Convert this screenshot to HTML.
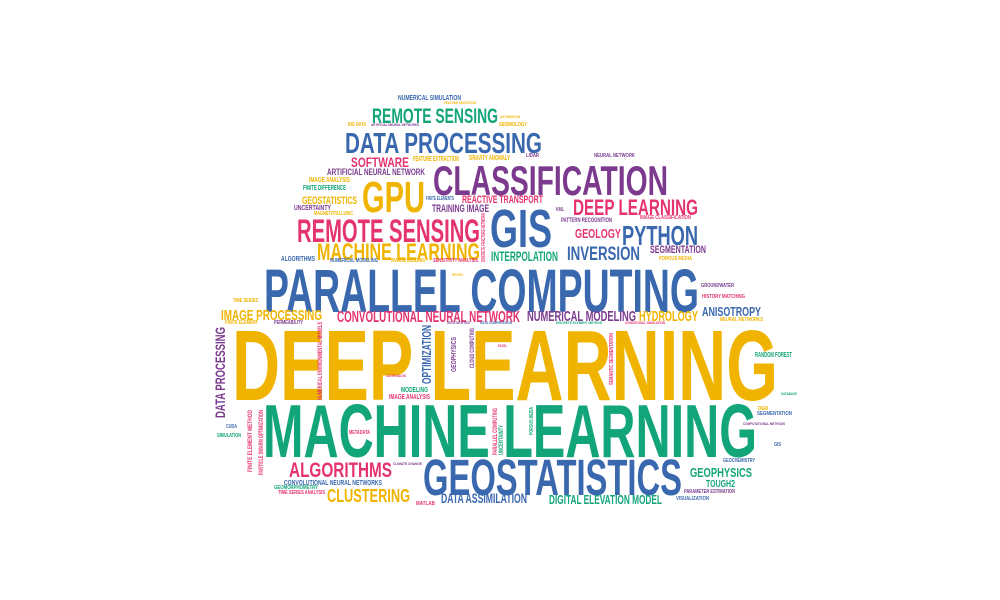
<!DOCTYPE html>
<html><head><meta charset="utf-8"><style>
html,body{margin:0;padding:0;background:#fff;width:1000px;height:600px;overflow:hidden}
svg{display:block}
text{font-family:"Liberation Sans",sans-serif;font-weight:bold}
</style></head><body>
<svg width="1000" height="600" viewBox="0 0 1000 600" xmlns="http://www.w3.org/2000/svg">
<defs><style>
.g{fill:#f0b400}.n{fill:#13a57a}.b{fill:#3a68ae}.p{fill:#7b3a8e}.k{fill:#e5336d}
</style></defs>
<g lengthAdjust="spacingAndGlyphs">
<!-- big -->
<text class="g" x="232" y="400" font-size="100" textLength="546" lengthAdjust="spacingAndGlyphs">DEEP LEARNING</text>
<text class="n" x="263" y="457" font-size="75" textLength="494" lengthAdjust="spacingAndGlyphs">MACHINE LEARNING</text>
<text class="b" x="264" y="312" font-size="61" textLength="435" lengthAdjust="spacingAndGlyphs">PARALLEL COMPUTING</text>
<text class="b" x="423" y="495" font-size="51" textLength="259" lengthAdjust="spacingAndGlyphs">GEOSTATISTICS</text>
<text class="p" x="433" y="195" font-size="42" textLength="235" lengthAdjust="spacingAndGlyphs">CLASSIFICATION</text>
<text class="b" x="490" y="247" font-size="54" textLength="62" lengthAdjust="spacingAndGlyphs">GIS</text>
<text class="g" x="362" y="212" font-size="44" textLength="63" lengthAdjust="spacingAndGlyphs">GPU</text>
<text class="k" x="297" y="242" font-size="32" textLength="183" lengthAdjust="spacingAndGlyphs">REMOTE SENSING</text>
<text class="g" x="317" y="260" font-size="24" textLength="163" lengthAdjust="spacingAndGlyphs">MACHINE LEARNING</text>
<text class="b" x="345" y="153" font-size="29" textLength="197" lengthAdjust="spacingAndGlyphs">DATA PROCESSING</text>
<text class="n" x="372" y="123" font-size="21" textLength="126" lengthAdjust="spacingAndGlyphs">REMOTE SENSING</text>
<text class="k" x="573" y="215" font-size="22" textLength="125" lengthAdjust="spacingAndGlyphs">DEEP LEARNING</text>
<text class="b" x="622" y="245" font-size="28" textLength="76" lengthAdjust="spacingAndGlyphs">PYTHON</text>
<text class="b" x="567" y="260" font-size="19" textLength="73" lengthAdjust="spacingAndGlyphs">INVERSION</text>
<text class="k" x="289" y="477" font-size="21" textLength="103" lengthAdjust="spacingAndGlyphs">ALGORITHMS</text>
<text class="g" x="327" y="502" font-size="18" textLength="83" lengthAdjust="spacingAndGlyphs">CLUSTERING</text>
<text class="k" x="337" y="322" font-size="16" textLength="183" lengthAdjust="spacingAndGlyphs">CONVOLUTIONAL NEURAL NETWORK</text>
<text class="p" x="527" y="321" font-size="15" textLength="109" lengthAdjust="spacingAndGlyphs">NUMERICAL MODELING</text>
<text class="g" x="639" y="321" font-size="15" textLength="59" lengthAdjust="spacingAndGlyphs">HYDROLOGY</text>
<text class="b" x="702" y="316" font-size="13" textLength="59" lengthAdjust="spacingAndGlyphs">ANISOTROPY</text>
<text class="g" x="221" y="320" font-size="15" textLength="101" lengthAdjust="spacingAndGlyphs">IMAGE PROCESSING</text>
<text class="b" x="441" y="503" font-size="14" textLength="86" lengthAdjust="spacingAndGlyphs">DATA ASSIMILATION</text>
<text class="n" x="549" y="504" font-size="13" textLength="113" lengthAdjust="spacingAndGlyphs">DIGITAL ELEVATION MODEL</text>
<text class="n" x="690" y="477" font-size="13" textLength="62" lengthAdjust="spacingAndGlyphs">GEOPHYSICS</text>
<text class="n" x="706" y="487" font-size="10" textLength="29" lengthAdjust="spacingAndGlyphs">TOUGH2</text>
<text class="k" x="575" y="238" font-size="13" textLength="46" lengthAdjust="spacingAndGlyphs">GEOLOGY</text>
<text class="n" x="491" y="261" font-size="14" textLength="67" lengthAdjust="spacingAndGlyphs">INTERPOLATION</text>
<text class="p" x="650" y="253" font-size="11" textLength="56" lengthAdjust="spacingAndGlyphs">SEGMENTATION</text>
<text class="k" x="351" y="167" font-size="14" textLength="58" lengthAdjust="spacingAndGlyphs">SOFTWARE</text>
<text class="k" x="462" y="203" font-size="11" textLength="81" lengthAdjust="spacingAndGlyphs">REACTIVE TRANSPORT</text>
<text class="p" x="432" y="212" font-size="11" textLength="57" lengthAdjust="spacingAndGlyphs">TRAINING IMAGE</text>
<text class="g" x="302" y="204" font-size="11" textLength="55" lengthAdjust="spacingAndGlyphs">GEOSTATISTICS</text>
<text class="p" x="327" y="175" font-size="9" textLength="98" lengthAdjust="spacingAndGlyphs">ARTIFICIAL NEURAL NETWORK</text>
<!-- small -->
<g font-size="7" font-weight="normal">
<text class="g" x="309" y="182" textLength="41" lengthAdjust="spacingAndGlyphs">IMAGE ANALYSIS</text>
<text class="n" x="303" y="190" textLength="43" lengthAdjust="spacingAndGlyphs">FINITE DIFFERENCE</text>
<text class="p" x="294" y="210" textLength="37" lengthAdjust="spacingAndGlyphs">UNCERTAINTY</text>
<text class="g" x="314" y="215" font-size="5" textLength="39" lengthAdjust="spacingAndGlyphs">MAGNETOTELLURIC</text>
<text class="g" x="413" y="161" textLength="46" lengthAdjust="spacingAndGlyphs">FEATURE EXTRACTION</text>
<text class="g" x="469" y="160" textLength="41" lengthAdjust="spacingAndGlyphs">GRAVITY ANOMALY</text>
<text class="b" x="426" y="200" font-size="5" textLength="28" lengthAdjust="spacingAndGlyphs">FINITE ELEMENTS</text>
<text class="b" x="398" y="100" textLength="63" lengthAdjust="spacingAndGlyphs">NUMERICAL SIMULATION</text>
<text class="g" x="444" y="104" font-size="4" textLength="32" lengthAdjust="spacingAndGlyphs">FEATURE SELECTION</text>
<text class="g" x="348" y="126" font-size="5" textLength="18" lengthAdjust="spacingAndGlyphs">BIG DATA</text>
<text class="p" x="371" y="126" font-size="4" textLength="48" lengthAdjust="spacingAndGlyphs">ARTIFICIAL NEURAL NETWORKS</text>
<text class="g" x="500" y="118" font-size="4" textLength="20" lengthAdjust="spacingAndGlyphs">AUTOMATION</text>
<text class="g" x="499" y="126" font-size="5" textLength="28" lengthAdjust="spacingAndGlyphs">SEISMOLOGY</text>
<text class="p" x="526" y="157" font-size="5" textLength="13" lengthAdjust="spacingAndGlyphs">LIDAR</text>
<text class="p" x="594" y="157" font-size="5" textLength="41" lengthAdjust="spacingAndGlyphs">NEURAL NETWORK</text>
<text class="p" x="556" y="211" font-size="5" textLength="8" lengthAdjust="spacingAndGlyphs">KML</text>
<text class="p" x="561" y="222" font-size="6" textLength="51" lengthAdjust="spacingAndGlyphs">PATTERN RECOGNITION</text>
<text class="k" x="640" y="219" font-size="5" textLength="51" lengthAdjust="spacingAndGlyphs">IMAGE CLASSIFICATION</text>
<text class="g" x="659" y="260" font-size="5" textLength="33" lengthAdjust="spacingAndGlyphs">POROUS MEDIA</text>
<text class="p" x="701" y="287" font-size="5" textLength="33" lengthAdjust="spacingAndGlyphs">GROUNDWATER</text>
<text class="k" x="702" y="298" font-size="5" textLength="43" lengthAdjust="spacingAndGlyphs">HISTORY MATCHING</text>
<text class="g" x="720" y="321" font-size="5" textLength="43" lengthAdjust="spacingAndGlyphs">NEURAL NETWORKS</text>
<text class="g" x="233" y="302" font-size="5" textLength="25" lengthAdjust="spacingAndGlyphs">TIME SERIES</text>
<text class="g" x="225" y="324" font-size="5" textLength="33" lengthAdjust="spacingAndGlyphs">FINITE ELEMENT</text>
<text class="p" x="274" y="324" font-size="5" textLength="29" lengthAdjust="spacingAndGlyphs">PERMEABILITY</text>
<text class="b" x="281" y="261" textLength="34" lengthAdjust="spacingAndGlyphs">ALGORITHMS</text>
<text class="b" x="330" y="262" font-size="5" textLength="48" lengthAdjust="spacingAndGlyphs">NUMERICAL MODELING</text>
<text class="g" x="391" y="262" font-size="5" textLength="34" lengthAdjust="spacingAndGlyphs">INVERSE MODELING</text>
<text class="k" x="433" y="262" font-size="5" textLength="45" lengthAdjust="spacingAndGlyphs">SENSITIVITY ANALYSIS</text>
<text class="g" x="452" y="276" font-size="4" textLength="11" lengthAdjust="spacingAndGlyphs">GPGPU</text>
<text class="k" x="389" y="399" textLength="41" lengthAdjust="spacingAndGlyphs">IMAGE ANALYSIS</text>
<text class="n" x="401" y="392" textLength="27" lengthAdjust="spacingAndGlyphs">MODELING</text>
<text class="k" x="386" y="377" font-size="4" textLength="20" lengthAdjust="spacingAndGlyphs">CLUSTER ANALYSIS</text>
<text class="k" x="349" y="434" font-size="5" textLength="21" lengthAdjust="spacingAndGlyphs">METADATA</text>
<text class="b" x="226" y="428" font-size="5" textLength="11" lengthAdjust="spacingAndGlyphs">CUDA</text>
<text class="n" x="217" y="437" font-size="5" textLength="24" lengthAdjust="spacingAndGlyphs">SIMULATION</text>
<text class="b" x="284" y="485" textLength="98" lengthAdjust="spacingAndGlyphs">CONVOLUTIONAL NEURAL NETWORKS</text>
<text class="n" x="274" y="489" font-size="5" textLength="44" lengthAdjust="spacingAndGlyphs">GEOMORPHOMETRY</text>
<text class="k" x="278" y="494" font-size="5" textLength="47" lengthAdjust="spacingAndGlyphs">TIME SERIES ANALYSIS</text>
<text class="p" x="393" y="465" font-size="4" textLength="29" lengthAdjust="spacingAndGlyphs">CLIMATE CHANGE</text>
<text class="k" x="416" y="505" font-size="5" textLength="19" lengthAdjust="spacingAndGlyphs">MATLAB</text>
<text class="n" x="556" y="324" font-size="4" textLength="46" lengthAdjust="spacingAndGlyphs">DISCRETE ELEMENT METHOD</text>
<text class="k" x="625" y="324" font-size="4" textLength="40" lengthAdjust="spacingAndGlyphs">CONDITIONAL SIMULATION</text>
<text class="p" x="447" y="324" font-size="4" textLength="23" lengthAdjust="spacingAndGlyphs">GEOSTATISTICS</text>
<text class="b" x="480" y="324" font-size="4" textLength="32" lengthAdjust="spacingAndGlyphs">DATA COMPRESSION</text>
<text class="k" x="498" y="347" font-size="4" textLength="9" lengthAdjust="spacingAndGlyphs">EXCEL</text>
<text class="p" x="684" y="493" font-size="5" textLength="51" lengthAdjust="spacingAndGlyphs">PARAMETER ESTIMATION</text>
<text class="b" x="676" y="500" font-size="5" textLength="33" lengthAdjust="spacingAndGlyphs">VISUALIZATION</text>
<text class="b" x="723" y="462" font-size="5" textLength="32" lengthAdjust="spacingAndGlyphs">GEOCHEMISTRY</text>
<text class="n" x="755" y="357" textLength="37" lengthAdjust="spacingAndGlyphs">RANDOM FOREST</text>
<text class="n" x="781" y="395" font-size="4" textLength="16" lengthAdjust="spacingAndGlyphs">DATABASE</text>
<text class="g" x="758" y="410" font-size="5" textLength="10" lengthAdjust="spacingAndGlyphs">DEM</text>
<text class="b" x="757" y="415" font-size="5" textLength="35" lengthAdjust="spacingAndGlyphs">SEGMENTATION</text>
<text class="p" x="743" y="425" font-size="4" textLength="42" lengthAdjust="spacingAndGlyphs">COMPUTATIONAL METHODS</text>
<text class="b" x="774" y="446" font-size="5" textLength="7" lengthAdjust="spacingAndGlyphs">GIS</text>
</g>
<!-- vertical -->
<text class="p" transform="translate(225,418) rotate(-90)" font-size="14" textLength="91" lengthAdjust="spacingAndGlyphs">DATA PROCESSING</text>
<text class="b" transform="translate(431,384) rotate(-90)" font-size="13" textLength="59" lengthAdjust="spacingAndGlyphs">OPTIMIZATION</text>
<text class="p" transform="translate(456,372) rotate(-90)" font-size="7" font-weight="normal" textLength="35" lengthAdjust="spacingAndGlyphs">GEOPHYSICS</text>
<text class="p" transform="translate(474,368) rotate(-90)" font-size="6" font-weight="normal" textLength="40" lengthAdjust="spacingAndGlyphs">CLOUD COMPUTING</text>
<text class="k" transform="translate(322,400) rotate(-90)" font-size="6" font-weight="normal" textLength="78" lengthAdjust="spacingAndGlyphs">NUMERICAL ENVIRONMENTAL MODELS</text>
<text class="k" transform="translate(252,472) rotate(-90)" font-size="6" font-weight="normal" textLength="62" lengthAdjust="spacingAndGlyphs">FINITE ELEMENT METHOD</text>
<text class="k" transform="translate(263,475) rotate(-90)" font-size="6" font-weight="normal" textLength="65" lengthAdjust="spacingAndGlyphs">PARTICLE SWARM OPTIMIZATION</text>
<text class="k" transform="translate(497,455) rotate(-90)" font-size="6" font-weight="normal" textLength="47" lengthAdjust="spacingAndGlyphs">PARALLEL COMPUTING</text>
<text class="n" transform="translate(503,455) rotate(-90)" font-size="6" font-weight="normal" textLength="30" lengthAdjust="spacingAndGlyphs">UNCERTAINTY</text>
<text class="n" transform="translate(533,435) rotate(-90)" font-size="5" font-weight="normal" textLength="28" lengthAdjust="spacingAndGlyphs">POROUS MEDIA</text>
<text class="k" transform="translate(613,385) rotate(-90)" font-size="5" font-weight="normal" textLength="52" lengthAdjust="spacingAndGlyphs">SEMANTIC SEGMENTATION</text>
<text class="k" transform="translate(485,262) rotate(-90)" font-size="5" font-weight="normal" textLength="49" lengthAdjust="spacingAndGlyphs">DISCRETE FRACTURE NETWORK</text>
</g>
</svg>
</body></html>
